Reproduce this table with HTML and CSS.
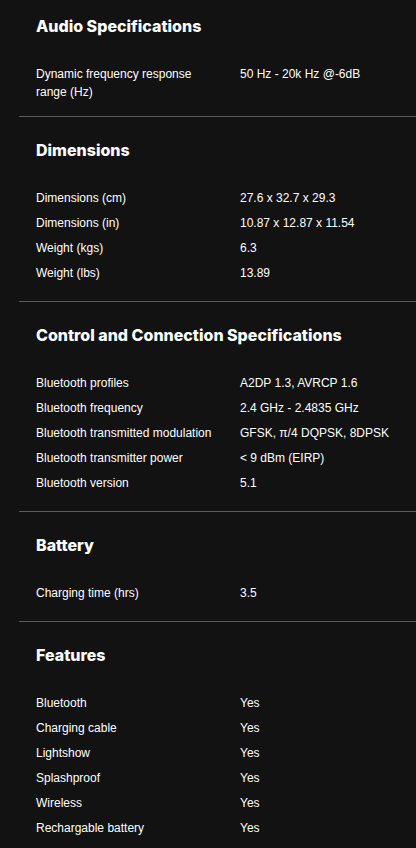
FILE: index.html
```html
<!DOCTYPE html>
<html lang="en">
<head>
<meta charset="utf-8">
<title>Specifications</title>
<link rel="stylesheet" href="styles.css">
</head>
<body>
<main class="specs">
  <section class="group">
    <h2 class="group-title">Audio Specifications</h2>
    <dl class="rows">
      <div class="row"><dt>Dynamic frequency response range (Hz)</dt><dd>50 Hz - 20k Hz @-6dB</dd></div>
    </dl>
  </section>
  <section class="group">
    <h2 class="group-title">Dimensions</h2>
    <dl class="rows">
      <div class="row"><dt>Dimensions (cm)</dt><dd>27.6 x 32.7 x 29.3</dd></div>
      <div class="row"><dt>Dimensions (in)</dt><dd>10.87 x 12.87 x 11.54</dd></div>
      <div class="row"><dt>Weight (kgs)</dt><dd>6.3</dd></div>
      <div class="row"><dt>Weight (lbs)</dt><dd>13.89</dd></div>
    </dl>
  </section>
  <section class="group">
    <h2 class="group-title">Control and Connection Specifications</h2>
    <dl class="rows">
      <div class="row"><dt>Bluetooth profiles</dt><dd>A2DP 1.3, AVRCP 1.6</dd></div>
      <div class="row"><dt>Bluetooth frequency</dt><dd>2.4 GHz - 2.4835 GHz</dd></div>
      <div class="row"><dt>Bluetooth transmitted modulation</dt><dd>GFSK, π/4 DQPSK, 8DPSK</dd></div>
      <div class="row"><dt>Bluetooth transmitter power</dt><dd>&lt; 9 dBm (EIRP)</dd></div>
      <div class="row"><dt>Bluetooth version</dt><dd>5.1</dd></div>
    </dl>
  </section>
  <section class="group">
    <h2 class="group-title">Battery</h2>
    <dl class="rows">
      <div class="row"><dt>Charging time (hrs)</dt><dd>3.5</dd></div>
    </dl>
  </section>
  <section class="group">
    <h2 class="group-title">Features</h2>
    <dl class="rows">
      <div class="row"><dt>Bluetooth</dt><dd>Yes</dd></div>
      <div class="row"><dt>Charging cable</dt><dd>Yes</dd></div>
      <div class="row"><dt>Lightshow</dt><dd>Yes</dd></div>
      <div class="row"><dt>Splashproof</dt><dd>Yes</dd></div>
      <div class="row"><dt>Wireless</dt><dd>Yes</dd></div>
      <div class="row"><dt>Rechargable battery</dt><dd>Yes</dd></div>
    </dl>
  </section>
</main>
</body>
</html>
```

FILE: styles.css
```css
html, body {
  margin: 0;
  padding: 0;
  background: #121212;
}

body {
  color: #ffffff;
  font-family: "Liberation Sans", Arial, sans-serif;
  font-size: 12px;
}

.specs {
  padding-left: 19px;
}

.group {
  padding: 21px 0 16px 17px;
  border-bottom: 1px solid #5a5a5a;
}

.group:first-child {
  padding-top: 14px;
  padding-bottom: 12px;
}

.group:last-child {
  border-bottom: none;
}

.group-title {
  margin: 0 0 23px;
  font-family: Inter, "Noto Sans", sans-serif;
  font-weight: 800;
  font-size: 16px;
  line-height: 24px;
  letter-spacing: 0;
}

.rows {
  margin: 0;
  display: flex;
  flex-direction: column;
}

.row {
  display: grid;
  grid-template-columns: 204px 1fr;
  padding: 3.5px 0;
  line-height: 18px;
}

.row dt,
.row dd {
  margin: 0;
}

.row dt {
  padding-right: 16px;
}
```
